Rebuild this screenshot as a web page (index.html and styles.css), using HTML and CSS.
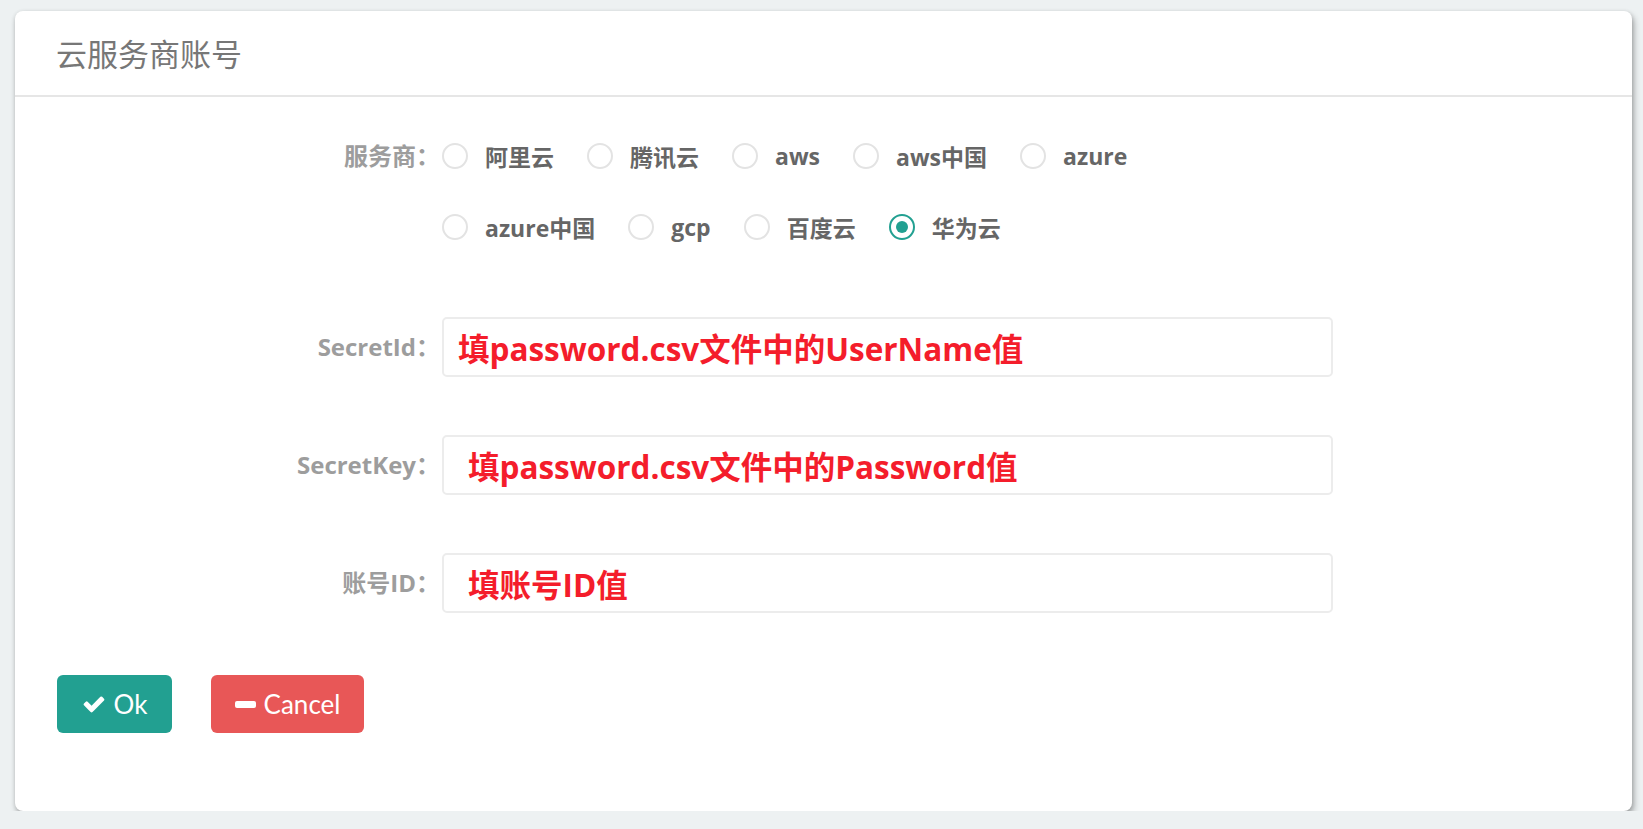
FILE: index.html
```html
<!DOCTYPE html>
<html lang="zh-CN">
<head>
  <meta charset="UTF-8" />
  <title>云服务商账号</title>
  <link rel="stylesheet" href="styles.css">
</head>
<body>

  <div class="card">
    <div class="card-header">云服务商账号</div>
    <div class="card-body">

      <div class="form-row radio-row">
        <label class="form-label">服务商：</label>
        <div class="radio-group">
          <label class="radio"><span class="radio-dot"></span>阿里云</label>
          <label class="radio"><span class="radio-dot"></span>腾讯云</label>
          <label class="radio"><span class="radio-dot"></span>aws</label>
          <label class="radio"><span class="radio-dot"></span>aws中国</label>
          <label class="radio"><span class="radio-dot"></span>azure</label>
          <label class="radio"><span class="radio-dot"></span>azure中国</label>
          <label class="radio"><span class="radio-dot"></span>gcp</label>
          <label class="radio"><span class="radio-dot"></span>百度云</label>
          <label class="radio checked"><span class="radio-dot"></span>华为云</label>
        </div>
      </div>

      <div class="form-row first-field">
        <label class="form-label">SecretId：</label>
        <div class="field">填password.csv文件中的UserName值</div>
      </div>

      <div class="form-row">
        <label class="form-label">SecretKey：</label>
        <div class="field indent">填password.csv文件中的Password值</div>
      </div>

      <div class="form-row">
        <label class="form-label">账号ID：</label>
        <div class="field indent">填账号ID值</div>
      </div>

      <div class="actions">
        <button class="btn btn-ok">
          <svg class="icon-check" viewBox="0 0 1792 1792"><path d="M1671 566q0 40-28 68l-724 724-136 136q-28 28-68 28t-68-28l-136-136-362-362q-28-28-28-68t28-68l136-136q28-28 68-28t68 28l294 295 656-657q28-28 68-28t68 28l136 136q28 28 28 68z"/></svg>
          Ok
        </button>
        <button class="btn btn-cancel"><span class="icon-minus"></span>Cancel</button>
      </div>

    </div>
  </div>

</body>
</html>
```

FILE: styles.css
```css
body {
  margin: 0;
  padding: 11px 11px 0 15px;
  background: #edf1f2;
  font-family: "Open Sans", "Noto Sans CJK SC", sans-serif;
}
.card {
  width: 1617px;
  background: #fff;
  border-radius: 8px;
  box-shadow: 0 1px 4px rgba(0, 0, 0, 0.12), 2px 4px 6px rgba(0, 0, 0, 0.3);
}
.card-header {
  height: 84px;
  line-height: 84px;
  padding-left: 41px;
  font-family: "Noto Sans CJK SC", sans-serif;
  font-size: 31px;
  color: #777;
  border-bottom: 2px solid #e6e6e6;
}
.card-body {
  display: flex;
  flex-direction: column;
  padding: 41px 0 78px 0;
}
.form-row {
  display: flex;
  align-items: center;
  margin-top: 58px;
}
.radio-row {
  align-items: flex-start;
  margin-top: 0;
}
.form-row.first-field {
  margin-top: 72px;
}
.form-label {
  width: 425px;
  flex-shrink: 0;
  margin-right: 2px;
  text-align: right;
  font-size: 24px;
  font-weight: bold;
  line-height: 36px;
  color: #9d9d9d;
}
.radio-group {
  width: 760px;
  display: flex;
  flex-wrap: wrap;
  row-gap: 35px;
}
.radio {
  display: flex;
  align-items: center;
  height: 36px;
  margin-right: 33px;
  font-size: 23px;
  font-weight: bold;
  color: #666;
}
.radio-dot {
  width: 26px;
  height: 26px;
  box-sizing: border-box;
  margin-right: 17px;
  border: 2px solid #e3e3e3;
  border-radius: 50%;
  position: relative;
}
.radio.checked .radio-dot {
  border-color: #22a091;
}
.radio.checked .radio-dot::after {
  content: "";
  position: absolute;
  left: 5px;
  top: 5px;
  width: 12px;
  height: 12px;
  border-radius: 50%;
  background: #22a091;
}
.field {
  width: 891px;
  height: 60px;
  box-sizing: border-box;
  padding-left: 14px;
  border: 2px solid #ececec;
  border-radius: 5px;
  display: flex;
  align-items: center;
  font-size: 31.5px;
  font-weight: bold;
  color: #f41d2b;
  white-space: nowrap;
}
.field.indent {
  padding-left: 24px;
}
.actions {
  display: flex;
  margin-top: 62px;
  padding-left: 42px;
}
.btn {
  height: 58px;
  border: none;
  border-radius: 6px;
  display: flex;
  align-items: center;
  justify-content: center;
  font-family: Lato, sans-serif;
  font-size: 26px;
  color: #fff;
  cursor: pointer;
}
.btn-ok {
  width: 115px;
  margin-right: 39px;
  background: #22a091;
}
.btn-cancel {
  width: 153px;
  background: #e85757;
}
.icon-check {
  width: 24px;
  height: 24px;
  fill: #fff;
  margin-right: 8px;
}
.icon-minus {
  width: 21px;
  height: 7px;
  border-radius: 2px;
  background: #fff;
  margin-right: 8px;
}
```
